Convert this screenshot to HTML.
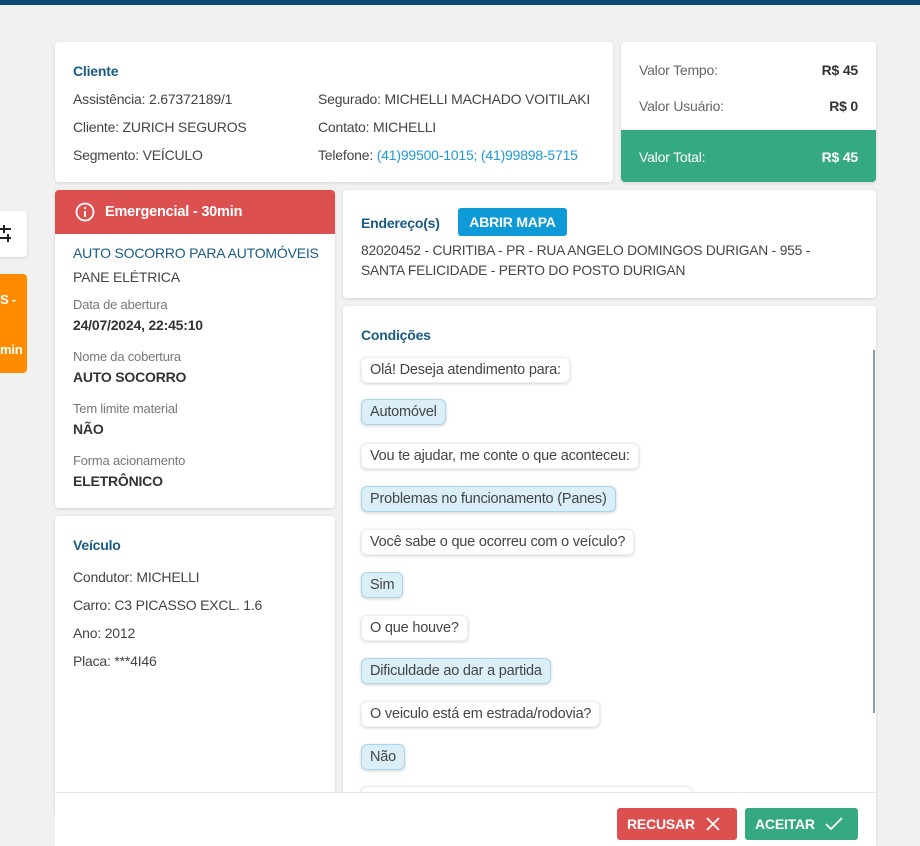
<!DOCTYPE html>
<html><head><meta charset="utf-8"><style>
*{box-sizing:border-box;margin:0;padding:0}
body{width:920px;height:846px;background:#f1f1f1;font-family:"Liberation Sans",sans-serif;font-size:14px;color:#444;position:relative;overflow:hidden;letter-spacing:-0.2px}
.a{position:absolute}
.card{position:absolute;background:#fff;border-radius:4px;box-shadow:0 1px 3px rgba(0,0,0,.12)}
.t{color:#185b84;font-weight:bold;font-size:14px}
.lbl{color:#777;font-size:13px}
.v{color:#333;font-weight:bold;font-size:14px}
.b{position:absolute;left:361px;height:26px;line-height:24px;padding:0 8px;border-radius:6px;background:#fff;border:1px solid #eee;box-shadow:0 1px 3px rgba(0,0,0,.18);font-size:14.5px;color:#444}
.b.q{background:#dbeff8;border:1px solid #a9d6ea}
</style></head><body>
<div class="a" style="left:0;top:0;width:920px;height:5px;background:#0d4d74"></div>

<div class="a" style="left:0;top:211px;width:27px;height:46px;background:#fff;border-radius:0 4px 4px 0;box-shadow:0 1px 3px rgba(0,0,0,.12)">
<svg style="position:absolute;left:0;top:14px" width="12" height="18" viewBox="0 0 12 18"><g stroke="#222" stroke-width="2"><line x1="0" y1="4" x2="11" y2="4"/><line x1="0" y1="13" x2="11" y2="13"/><line x1="4" y1="0" x2="4" y2="8"/><line x1="8" y1="9" x2="8" y2="17"/></g></svg></div>
<div class="a" style="left:0;top:274px;width:27px;height:99px;background:#ff8c00;border-radius:0 4px 4px 0;color:#fff;font-weight:bold;font-size:13px">
<div class="a" style="left:0;top:18px">S -</div><div class="a" style="left:0;top:68px">min</div></div>

<div class="card" style="left:55px;top:42px;width:558px;height:140px">
<div class="a t" style="left:18px;top:21px">Cliente</div>
<div class="a" style="left:18px;top:49px">Assistência: 2.67372189/1</div>
<div class="a" style="left:18px;top:77px">Cliente: ZURICH SEGUROS</div>
<div class="a" style="left:18px;top:105px">Segmento: VEÍCULO</div>
<div class="a" style="left:263px;top:49px;white-space:nowrap">Segurado: MICHELLI MACHADO VOITILAKI</div>
<div class="a" style="left:263px;top:77px">Contato: MICHELLI</div>
<div class="a" style="left:263px;top:105px;white-space:nowrap">Telefone: <span style="color:#1e9ad6">(41)99500-1015; (41)99898-5715</span></div>
</div>

<div class="card" style="left:621px;top:42px;width:255px;height:140px;overflow:hidden">
<div class="a" style="left:18px;top:20px;color:#666">Valor Tempo:</div><div class="a" style="right:18px;top:20px;font-weight:bold;color:#333">R$ 45</div>
<div class="a" style="left:18px;top:56px;color:#666">Valor Usuário:</div><div class="a" style="right:18px;top:56px;font-weight:bold;color:#333">R$ 0</div>
<div class="a" style="left:0;top:88px;width:255px;height:52px;background:#35a97f;color:#fff">
<div class="a" style="left:18px;top:19px">Valor Total:</div><div class="a" style="right:18px;top:19px;font-weight:bold">R$ 45</div></div>
</div>

<div class="card" style="left:55px;top:190px;width:280px;height:318px;overflow:hidden">
<div class="a" style="left:0;top:0;width:280px;height:44px;background:#dc5050;color:#fff;font-weight:bold;font-size:14.5px">
<svg class="a" style="left:20px;top:12px" width="20" height="20" viewBox="0 0 20 20"><circle cx="10" cy="10" r="8.5" fill="none" stroke="#fff" stroke-width="1.8"/><line x1="10" y1="9" x2="10" y2="15" stroke="#fff" stroke-width="2"/><circle cx="10" cy="6" r="1.2" fill="#fff"/></svg>
<div class="a" style="left:50px;top:14px">Emergencial - 30min</div></div>
<div class="a" style="left:18px;top:55px;color:#185b84;font-size:14px;white-space:nowrap">AUTO SOCORRO PARA AUTOMÓVEIS</div>
<div class="a" style="left:18px;top:79px">PANE ELÉTRICA</div>
<div class="a lbl" style="left:18px;top:107px">Data de abertura</div><div class="a v" style="left:18px;top:127px">24/07/2024, 22:45:10</div>
<div class="a lbl" style="left:18px;top:159px">Nome da cobertura</div><div class="a v" style="left:18px;top:179px">AUTO SOCORRO</div>
<div class="a lbl" style="left:18px;top:211px">Tem limite material</div><div class="a v" style="left:18px;top:231px">NÃO</div>
<div class="a lbl" style="left:18px;top:263px">Forma acionamento</div><div class="a v" style="left:18px;top:283px">ELETRÔNICO</div>
</div>

<div class="card" style="left:55px;top:516px;width:280px;height:300px">
<div class="a t" style="left:18px;top:21px">Veículo</div>
<div class="a" style="left:18px;top:53px">Condutor: MICHELLI</div>
<div class="a" style="left:18px;top:81px">Carro: C3 PICASSO EXCL. 1.6</div>
<div class="a" style="left:18px;top:109px">Ano: 2012</div>
<div class="a" style="left:18px;top:137px">Placa: ***4I46</div>
</div>

<div class="card" style="left:343px;top:190px;width:533px;height:108px">
<div class="a t" style="left:18px;top:25px">Endereço(s)</div>
<div class="a" style="left:115px;top:18px;width:109px;height:28px;background:#0d9ad6;border-radius:3px;color:#fff;font-weight:bold;font-size:14px;text-align:center;line-height:28px">ABRIR MAPA</div>
<div class="a" style="left:18px;top:51px;line-height:20px;font-size:13.8px;white-space:nowrap">82020452 - CURITIBA - PR - RUA ANGELO DOMINGOS DURIGAN - 955 -<br>SANTA FELICIDADE - PERTO DO POSTO DURIGAN</div>
</div>

<div class="card" style="left:343px;top:306px;width:533px;height:540px"></div>
<div class="a t" style="left:361px;top:327px">Condições</div>
<div class="a" style="left:873px;top:350px;width:2px;height:363px;background:#8a9ab0"></div>
<div class="b" style="top:357px">Olá! Deseja atendimento para:</div>
<div class="b q" style="top:399px">Automóvel</div>
<div class="b" style="top:443px">Vou te ajudar, me conte o que aconteceu:</div>
<div class="b q" style="top:486px">Problemas no funcionamento (Panes)</div>
<div class="b" style="top:529px">Você sabe o que ocorreu com o veículo?</div>
<div class="b q" style="top:572px">Sim</div>
<div class="b" style="top:615px">O que houve?</div>
<div class="b q" style="top:658px">Dificuldade ao dar a partida</div>
<div class="b" style="top:701px">O veiculo está em estrada/rodovia?</div>
<div class="b q" style="top:744px">Não</div>
<div class="b" style="top:786px;width:332px"></div>

<div class="a" style="left:55px;top:792px;width:821px;height:54px;background:#fff;border-top:1px solid #e6e6e6">
<div class="a" style="left:562px;top:15px;width:120px;height:32px;background:#dc5050;border-radius:3px;color:#fff;font-weight:bold;font-size:14px;line-height:32px;padding-left:10px">RECUSAR
<svg class="a" style="left:89px;top:9px" width="14" height="14"><path d="M1 1L13 13M13 1L1 13" stroke="#fff" stroke-width="1.8"/></svg></div>
<div class="a" style="left:690px;top:15px;width:113px;height:32px;background:#35a97f;border-radius:3px;color:#fff;font-weight:bold;font-size:14px;line-height:32px;padding-left:10px">ACEITAR
<svg class="a" style="left:80px;top:9px" width="18" height="14"><path d="M1 7L6 12L17 1" fill="none" stroke="#fff" stroke-width="1.8"/></svg></div>
</div>
</body></html>
